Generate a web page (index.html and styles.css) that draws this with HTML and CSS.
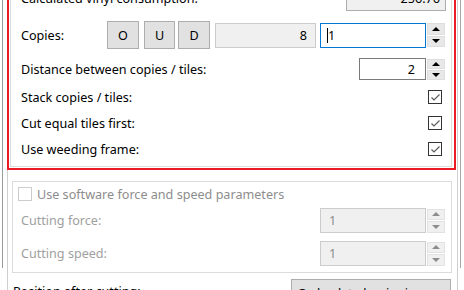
FILE: index.html
```html
<!DOCTYPE html>
<html lang="en">
<head>
    <meta charset="UTF-8">
    <meta name="viewport" content="width=device-width, initial-scale=1.0">
    <title>Cut settings</title>
    <link rel="stylesheet" href="styles.css">
</head>
<body>
    <div class="frame">
        <div class="panel">
            <div class="group top-group">
                <div class="row calc-row">
                    <span class="label">Calculated vinyl consumption:</span>
                    <div class="field readonly calc-field">256.76</div>
                </div>
                <div class="row copies-row">
                    <span class="label">Copies:</span>
                    <button class="btn btn-o">O</button>
                    <button class="btn btn-u">U</button>
                    <button class="btn btn-d">D</button>
                    <div class="field readonly count-field">8</div>
                    <div class="field active copies-input"><span class="caret"></span>1</div>
                    <div class="spin"><span class="up"></span><span class="down"></span></div>
                </div>
                <div class="row distance-row">
                    <span class="label">Distance between copies / tiles:</span>
                    <div class="field distance-input">2</div>
                    <div class="spin"><span class="up"></span><span class="down"></span></div>
                </div>
                <div class="row check-row">
                    <span class="label">Stack copies / tiles:</span>
                    <span class="check checked"><svg width="11" height="11" viewBox="0 0 11 11"><polyline points="1.5,5.5 4,8 9.5,2.5" /></svg></span>
                </div>
                <div class="row check-row">
                    <span class="label">Cut equal tiles first:</span>
                    <span class="check checked"><svg width="11" height="11" viewBox="0 0 11 11"><polyline points="1.5,5.5 4,8 9.5,2.5" /></svg></span>
                </div>
                <div class="row check-row">
                    <span class="label">Use weeding frame:</span>
                    <span class="check checked"><svg width="11" height="11" viewBox="0 0 11 11"><polyline points="1.5,5.5 4,8 9.5,2.5" /></svg></span>
                </div>
            </div>

            <div class="group force-group">
                <div class="legend-row">
                    <span class="check disabled"></span>
                    <span class="legend-text">Use software force and speed parameters</span>
                </div>
                <div class="row param-row">
                    <span class="label muted">Cutting force:</span>
                    <div class="field disabled-field">1</div>
                    <div class="spin faded"><span class="up"></span><span class="down"></span></div>
                </div>
                <div class="row param-row">
                    <span class="label muted">Cutting speed:</span>
                    <div class="field disabled-field">1</div>
                    <div class="spin faded"><span class="up"></span><span class="down"></span></div>
                </div>
            </div>

            <div class="bottom-row">
                <span class="label">Position after cutting:</span>
                <button class="btn back-btn">Go back to beginning</button>
            </div>
        </div>
    </div>
    <!-- annotation around the copies settings -->
    <div class="highlight"></div>
</body>
</html>
```

FILE: styles.css
```css
body {
    margin: 0;
    width: 464px;
    height: 290px;
    overflow: hidden;
    background-color: #ffffff;
    font-family: "Noto Sans", "Open Sans", sans-serif;
    font-size: 12.6px;
    color: #000000;
    position: relative;
}
.frame {
    margin-left: 2px;
    width: 453px;
    height: 290px;
    padding-left: 4px;
    padding-right: 0;
    border-left: 1px solid #9a9a9a;
    border-right: 1px solid #a8a8a8;
}
.panel {
    width: 449px;
    height: 330px;
    margin-top: -22px;
    border-left: 1px solid #cfcfcf;
    border-right: 1px solid #cfcfcf;
}
.group {
    border: 1px solid #dcdcdc;
}
.top-group {
    margin: 0 5px 0 2px;
    padding: 7px 6px 4px 10px;
}
.row {
    display: flex;
    align-items: center;
}
.label {
    flex: 1;
    white-space: nowrap;
}
.muted {
    color: #a0a0a0;
}
.calc-row {
    height: 25px;
}
.copies-row {
    height: 28px;
    margin-top: 10px;
}
.distance-row {
    height: 22px;
    margin-top: 9px;
}
.check-row {
    height: 26px;
}
.distance-row + .check-row {
    margin-top: 4px;
}

/* text boxes */
.field {
    box-sizing: border-box;
    height: 25px;
    border: 1px solid #7a7a7a;
    background-color: #ffffff;
    display: flex;
    align-items: center;
    justify-content: flex-end;
    padding: 0 8px;
}
.readonly {
    background-color: #f0f0f0;
    border-color: #cccccc;
}
.calc-field {
    width: 100px;
    margin-right: -1px;
    border-color: #adadad;
    padding-right: 5px;
}
.count-field {
    width: 101px;
    margin-left: 5px;
}
.active {
    border-color: #0078d7;
    justify-content: flex-start;
    padding-left: 6px;
}
.copies-input {
    width: 106px;
    margin-left: 4px;
}
.caret {
    width: 1px;
    height: 15px;
    background-color: #000000;
}
.distance-input {
    width: 67px;
    height: 22px;
    padding-right: 10px;
}
.disabled-field {
    width: 106px;
    background-color: #f0f0f0;
    border-color: #cccccc;
    color: #8d8d8d;
    justify-content: flex-start;
}

/* spinner */
.spin {
    width: 18px;
    height: 24px;
    margin-left: 1px;
    display: flex;
    flex-direction: column;
    gap: 1px;
}
.distance-row .spin {
    height: 21px;
}
.spin span {
    flex: 1;
    background-color: #e8e8e8;
    border: 1px solid #dedede;
    display: flex;
    align-items: center;
    justify-content: center;
}
.spin .up::after {
    content: "";
    border-left: 4px solid transparent;
    border-right: 4px solid transparent;
    border-bottom: 4px solid #000000;
}
.spin .down::after {
    content: "";
    border-left: 4px solid transparent;
    border-right: 4px solid transparent;
    border-top: 4px solid #000000;
}
.faded span {
    background-color: #f0f0f0;
    border-color: #e2e2e2;
}
.faded .up::after {
    border-bottom-color: #8d8d8d;
}
.faded .down::after {
    border-top-color: #8d8d8d;
}

/* buttons */
.btn {
    box-sizing: border-box;
    height: 28px;
    border: 1px solid #adadad;
    background-color: #e1e1e1;
    font-family: inherit;
    font-size: 12.6px;
    color: #000000;
    padding: 0;
}
.btn-o {
    width: 32px;
}
.btn-u {
    width: 31px;
    margin-left: 5px;
}
.btn-d {
    width: 32px;
    margin-left: 3px;
}

/* checkboxes */
.check {
    box-sizing: border-box;
    width: 14px;
    height: 14px;
    border: 1px solid #333333;
    background-color: #ffffff;
    display: flex;
    align-items: center;
    justify-content: center;
}
.check-row .check {
    margin-right: 3px;
}
.check svg polyline {
    fill: none;
    stroke: #5c5c5c;
    stroke-width: 1.2;
}
.check.disabled {
    border-color: #cccccc;
}

/* lower group */
.force-group {
    margin: 14px 5px 0 4px;
    padding: 5px 6px 6px 8px;
}
.legend-row {
    height: 14px;
    display: flex;
    align-items: center;
    gap: 5px;
    margin-left: -3px;
}
.legend-text {
    color: #8d8d8d;
    white-space: nowrap;
}
.param-row {
    height: 25px;
    margin-top: 7px;
}
.param-row + .param-row {
    margin-top: 8px;
}

.bottom-row {
    display: flex;
    align-items: flex-start;
    margin: 6px 6px 0 5px;
}
.bottom-row .label {
    padding-top: 4px;
}
.back-btn {
    width: 160px;
    text-align: left;
    padding-left: 5px;
}

.highlight {
    position: absolute;
    left: 7px;
    top: -20px;
    width: 445px;
    height: 186px;
    border: 2px solid #ec1c24;
}
```
